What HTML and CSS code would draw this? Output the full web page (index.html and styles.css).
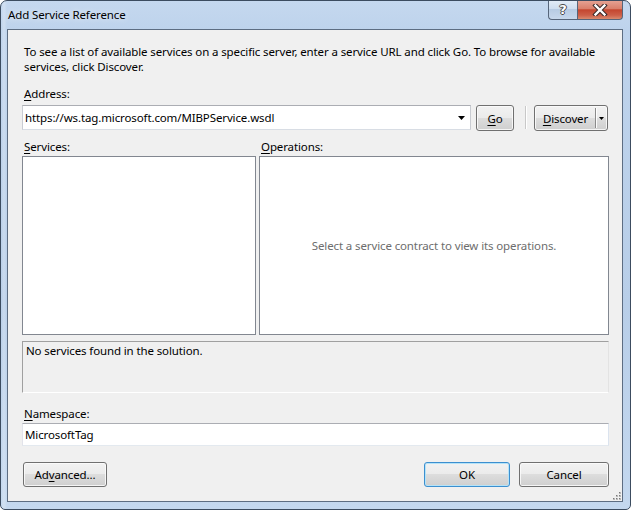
FILE: index.html
```html
<!DOCTYPE html>
<html>
<head>
<meta charset="utf-8">
<link rel="stylesheet" href="styles.css">
</head>
<body>
<div class="window">
  <div class="titlebar">
    <span class="title">Add Service Reference</span>
    <div class="caption">
      <div class="cap help"><span class="qmark">?</span></div>
      <div class="cap close">
        <svg width="16" height="12" viewBox="0 0 16 12">
          <path d="M3.5 1.5 L12.5 10.5 M12.5 1.5 L3.5 10.5" stroke="#3a2a2a" stroke-width="4.4" stroke-linecap="square" fill="none"/>
          <path d="M3.5 1.5 L12.5 10.5 M12.5 1.5 L3.5 10.5" stroke="#ffffff" stroke-width="2.4" stroke-linecap="square" fill="none"/>
        </svg>
      </div>
    </div>
  </div>
  <div class="client">
    <p class="intro">To see a list of available services on a specific server, enter a service URL and click Go. To browse for available<br>services, click Discover.</p>
    <div class="label label-address"><u>A</u>ddress:</div>
    <div class="addr-row">
      <div class="combo">
        <span class="combo-text">https://ws.tag.microsoft.com/MIBPService.wsdl</span>
        <svg class="combo-arrow" width="7" height="4" viewBox="0 0 7 4"><path d="M0 0 H7 L3.5 4 Z" fill="#000"/></svg>
      </div>
      <div class="btn btn-go"><u>G</u>o</div>
      <div class="sep"></div>
      <div class="btn split">
        <span class="split-main"><u>D</u>iscover</span>
        <span class="split-div"></span>
        <span class="split-arrow"><svg width="5" height="3" viewBox="0 0 5 3"><path d="M0 0 H5 L2.5 3 Z" fill="#000"/></svg></span>
      </div>
    </div>
    <div class="panes">
      <div class="pane">
        <div class="label label-pane"><u>S</u>ervices:</div>
        <div class="listbox"></div>
      </div>
      <div class="pane">
        <div class="label label-pane"><u>O</u>perations:</div>
        <div class="listbox ops-box"><span class="hint">Select a service contract to view its operations.</span></div>
      </div>
    </div>
    <div class="status">No services found in the solution.</div>
    <div class="label label-ns"><u>N</u>amespace:</div>
    <div class="textbox">MicrosoftTag</div>
    <div class="footer">
      <div class="btn btn-adv">Ad<u>v</u>anced...</div>
      <div class="btn btn-ok default">OK</div>
      <div class="btn btn-cancel">Cancel</div>
    </div>
    <svg class="grip" width="10" height="10" viewBox="0 0 10 10">
      <g fill="#b8b8b8">
        <rect x="8" y="2" width="2" height="2"/>
        <rect x="5" y="5" width="2" height="2"/><rect x="8" y="5" width="2" height="2"/>
        <rect x="2" y="8" width="2" height="2"/><rect x="5" y="8" width="2" height="2"/><rect x="8" y="8" width="2" height="2"/>
      </g>
      <g fill="#7a7a7a">
        <rect x="8" y="2" width="1" height="1"/>
        <rect x="5" y="5" width="1" height="1"/><rect x="8" y="5" width="1" height="1"/>
        <rect x="2" y="8" width="1" height="1"/><rect x="5" y="8" width="1" height="1"/><rect x="8" y="8" width="1" height="1"/>
      </g>
    </svg>
  </div>
</div>
</body>
</html>
```

FILE: styles.css
```css
* { box-sizing: border-box; }
html, body { margin: 0; padding: 0; }
body {
  width: 631px;
  height: 510px;
  overflow: hidden;
  background: #ffffff;
  font-family: "Noto Sans", "Open Sans", sans-serif;
  font-size: 11.5px;
  letter-spacing: -0.12px;
  color: #000;
}
u { text-decoration: underline; text-underline-offset: 2px; }

.window {
  width: 631px;
  height: 510px;
  border: 1px solid #3c4c60;
  border-radius: 7px 7px 5px 5px;
  background:
    linear-gradient(90deg, rgba(255,255,255,0.0) 0px, rgba(255,255,255,0.25) 3px, rgba(255,255,255,0) 6px),
    linear-gradient(180deg, #c5d8ef 0px, #bed3ec 28px, #b8cee8 60%, #c4d8ef 100%);
  display: flex;
  flex-direction: column;
  padding: 0 7px 7px 6px;
  overflow: hidden;
}

.titlebar {
  height: 28px;
  display: flex;
  justify-content: space-between;
  align-items: flex-start;
  padding-left: 1px;
}
.title {
  line-height: 28px;
  color: #000;
  text-shadow: 0 0 6px rgba(255,255,255,0.8);
}
.caption {
  display: flex;
  margin-top: -1px;
}
.cap {
  height: 20px;
  border: 1px solid #56657a;
  border-top: none;
  display: flex;
  align-items: center;
  justify-content: center;
}
.help {
  width: 29px;
  border-right: none;
  border-bottom-left-radius: 4px;
  background: linear-gradient(180deg, #e4edf7 0%, #cfdef0 45%, #b7cbe3 50%, #c7d8ec 100%);
}
.qmark {
  color: #fff;
  font-family: "DejaVu Sans", sans-serif;
  font-weight: bold;
  font-size: 13px;
  letter-spacing: 0;
  line-height: 14px;
  text-shadow: 1px 0 0 #4a4a4a, -1px 0 0 #4a4a4a, 0 1px 0 #4a4a4a, 0 -1px 0 #4a4a4a;
}
.close {
  width: 46px;
  border-bottom-right-radius: 4px;
  background: linear-gradient(180deg, #e6a597 0%, #d9806c 45%, #c4462f 52%, #cd5f48 80%, #d98a6e 100%);
}

.client {
  flex: 1;
  position: relative;
  border: 1px solid #5d6d82;
  background: #f0f0f0;
  padding: 14px 13px 0 14px;
  display: flex;
  flex-direction: column;
}

.intro {
  margin: 0;
  padding-left: 2px;
  line-height: 15px;
  white-space: nowrap;
}
.label {
  line-height: 15px;
  padding-left: 2px;
}
.label-address { margin-top: 12px; }

.addr-row {
  margin-top: 4px;
  height: 26px;
  display: flex;
  align-items: flex-start;
}
.combo {
  width: 449px;
  height: 25px;
  background: #fff;
  border: 1px solid #abadb3;
  border-left-color: #c9ccd2;
  border-right-color: #c9ccd2;
  border-bottom-color: #d8dde4;
  display: flex;
  align-items: center;
  padding-left: 2px;
  padding-right: 5px;
}
.combo-text { flex: 1; line-height: 15px; }
.combo-arrow { display: block; }

.btn {
  border: 1px solid #707070;
  border-radius: 3px;
  background: linear-gradient(180deg, #f2f2f2 0%, #ebebeb 49%, #dddddd 50%, #cfcfcf 100%);
  box-shadow: inset 0 0 0 1px rgba(252,252,252,0.85);
  display: flex;
  align-items: center;
  justify-content: center;
  line-height: 15px;
  color: #000;
}
.btn-go {
  margin-left: 5px;
  width: 38px;
  height: 26px;
}
.sep {
  margin-left: 11px;
  margin-top: 1px;
  width: 1px;
  height: 23px;
  background: #c8c8c8;
  box-shadow: 1px 0 0 #ffffff;
}
.split {
  margin-left: 8px;
  width: 74px;
  height: 26px;
  justify-content: flex-start;
  align-items: stretch;
}
.split-main {
  width: 60px;
  display: flex;
  align-items: center;
  justify-content: center;
  padding-left: 1px;
}
.split-div {
  width: 1px;
  margin: 2px 0;
  background: #8a8a8a;
  box-shadow: 1px 0 0 rgba(255,255,255,0.9);
}
.split-arrow {
  flex: 1;
  display: flex;
  align-items: center;
  justify-content: center;
}
.split-arrow svg { display: block; }

.panes {
  margin-top: 8px;
  display: grid;
  grid-template-columns: 234px 350px;
  column-gap: 3px;
}
.label-pane { margin-bottom: 2px; }
.listbox {
  height: 179px;
  background: #fff;
  border: 1px solid #828790;
}
.ops-box {
  display: flex;
  align-items: center;
  justify-content: center;
}
.hint {
  color: #6d6d6d;
  line-height: 15px;
}

.status {
  margin-top: 6px;
  height: 52px;
  border: 1px solid #a0a0a0;
  border-right-color: #e3e3e3;
  border-bottom-color: #ffffff;
  padding: 1px 3px;
  line-height: 15px;
  background: #f0f0f0;
}

.label-ns { margin-top: 13px; }
.textbox {
  margin-top: 2px;
  height: 23px;
  background: #fff;
  border: 1px solid #abadb3;
  border-left-color: #e2e3ea;
  border-right-color: #dbe3ee;
  border-bottom-color: #e3e9ef;
  padding-left: 2px;
  display: flex;
  align-items: center;
  line-height: 15px;
}

.footer {
  margin-top: 16px;
  display: flex;
  align-items: flex-start;
  column-gap: 9px;
}
.footer .btn { height: 25px; }
.btn-adv { width: 84px; margin-left: 1px; margin-right: auto; }
.btn-ok { width: 86px; }
.btn-cancel { width: 90px; }
.default {
  border-color: #3c8fcf;
  box-shadow: inset 0 0 0 1px #b5e3f8;
}

.grip {
  position: absolute;
  right: 1px;
  bottom: 1px;
}
```
